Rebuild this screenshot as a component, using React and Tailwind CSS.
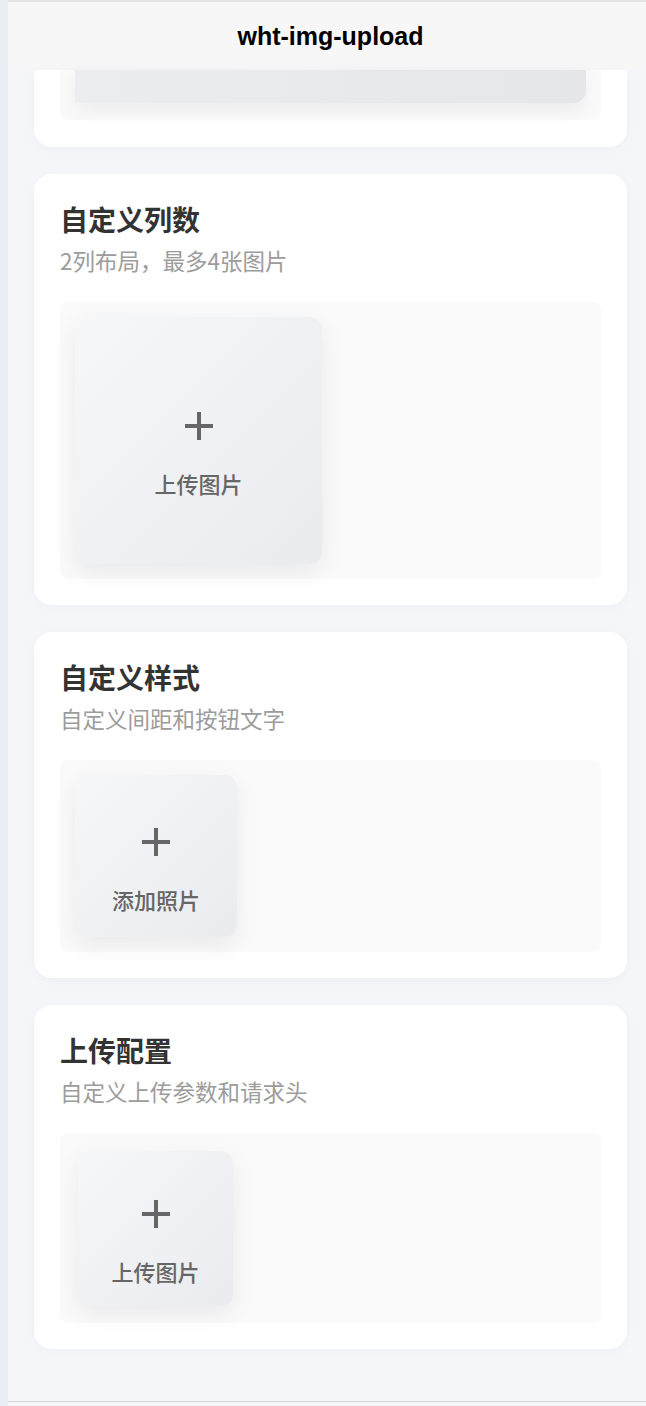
import React from 'react';

const cjk = { fontFamily: '"Noto Sans CJK SC", "Noto Sans", sans-serif' };

const PlusIcon = ({ size = 30 }) => (
  <svg width={size} height={size} viewBox="0 0 30 30" fill="none">
    <path d="M15 1v28M1 15h28" stroke="#666666" strokeWidth="4" />
  </svg>
);

const UploadTile = ({ size, label }) => (
  <div
    className="flex flex-col items-center justify-center rounded-[12px] bg-gradient-to-br from-[#f6f7f9] to-[#e9ebee] pt-[24px] shadow-[0_8px_24px_rgba(0,0,0,0.07)]"
    style={{ width: size, height: size }}
  >
    <PlusIcon />
    <span className="mt-[31px] text-[22px] leading-[22px] font-medium text-[#666666]" style={cjk}>
      {label}
    </span>
  </div>
);

const Section = ({ title, desc, tileSize, label, pad = 'p-[15px]' }) => (
  <div className="rounded-[18px] bg-white px-[26px] pt-[25px] pb-[26px] shadow-[0_2px_12px_rgba(0,0,0,0.03)]">
    <h3 className="text-[28px] leading-[40px] font-bold text-[#333333]" style={cjk}>
      {title}
    </h3>
    <p className="mt-[5px] text-[22.5px] leading-[32px] text-[#9c9c9c]" style={cjk}>
      {desc}
    </p>
    <div className={`mt-[26px] rounded-[8px] bg-[#fafafa] ${pad}`}>
      <UploadTile size={tileSize} label={label} />
    </div>
  </div>
);

export default function App() {
  return (
    <div className="flex h-[1406px] w-[646px] overflow-hidden bg-[#f4f6f9]">
      {/* left window edge */}
      <div className="w-[8px] shrink-0 bg-[#e9edf4]" />

      <div className="flex flex-1 flex-col">
        {/* nav bar */}
        <div className="flex h-[70px] shrink-0 items-center justify-center border-t-2 border-[#e4e5e7] bg-[#f7f7f7] pl-[7px]">
          <h1
            className="text-[25px] leading-none font-bold text-black"
            style={{ fontFamily: '"Liberation Sans", Arial, sans-serif' }}
          >
            wht-img-upload
          </h1>
        </div>

        <div className="flex flex-1 flex-col gap-[27px] pr-[19px] pl-[26px]">
          {/* first card, scrolled under the nav bar */}
          <div className="rounded-b-[18px] bg-white px-[26px] pb-[27px] shadow-[0_2px_12px_rgba(0,0,0,0.03)]">
            <div className="rounded-b-[8px] bg-[#fafafa] px-[15px] pb-[17px]">
              <div className="h-[33px] rounded-br-[12px] bg-gradient-to-r from-[#ebedf0] to-[#e4e6e9] shadow-[0_8px_20px_rgba(0,0,0,0.06)]" />
            </div>
          </div>

          <Section title="自定义列数" desc="2列布局，最多4张图片" tileSize={247} label="上传图片" />
          <Section title="自定义样式" desc="自定义间距和按钮文字" tileSize={162} label="添加照片" />
          <Section
            title="上传配置"
            desc="自定义上传参数和请求头"
            tileSize={155}
            label="上传图片"
            pad="pt-[18px] pb-[17px] px-[18px]"
          />
        </div>

        <div className="h-px shrink-0 bg-[#d6d7d9]" />
        <div className="h-[4px] shrink-0 bg-[#f6f7f9]" />
      </div>
    </div>
  );
}
